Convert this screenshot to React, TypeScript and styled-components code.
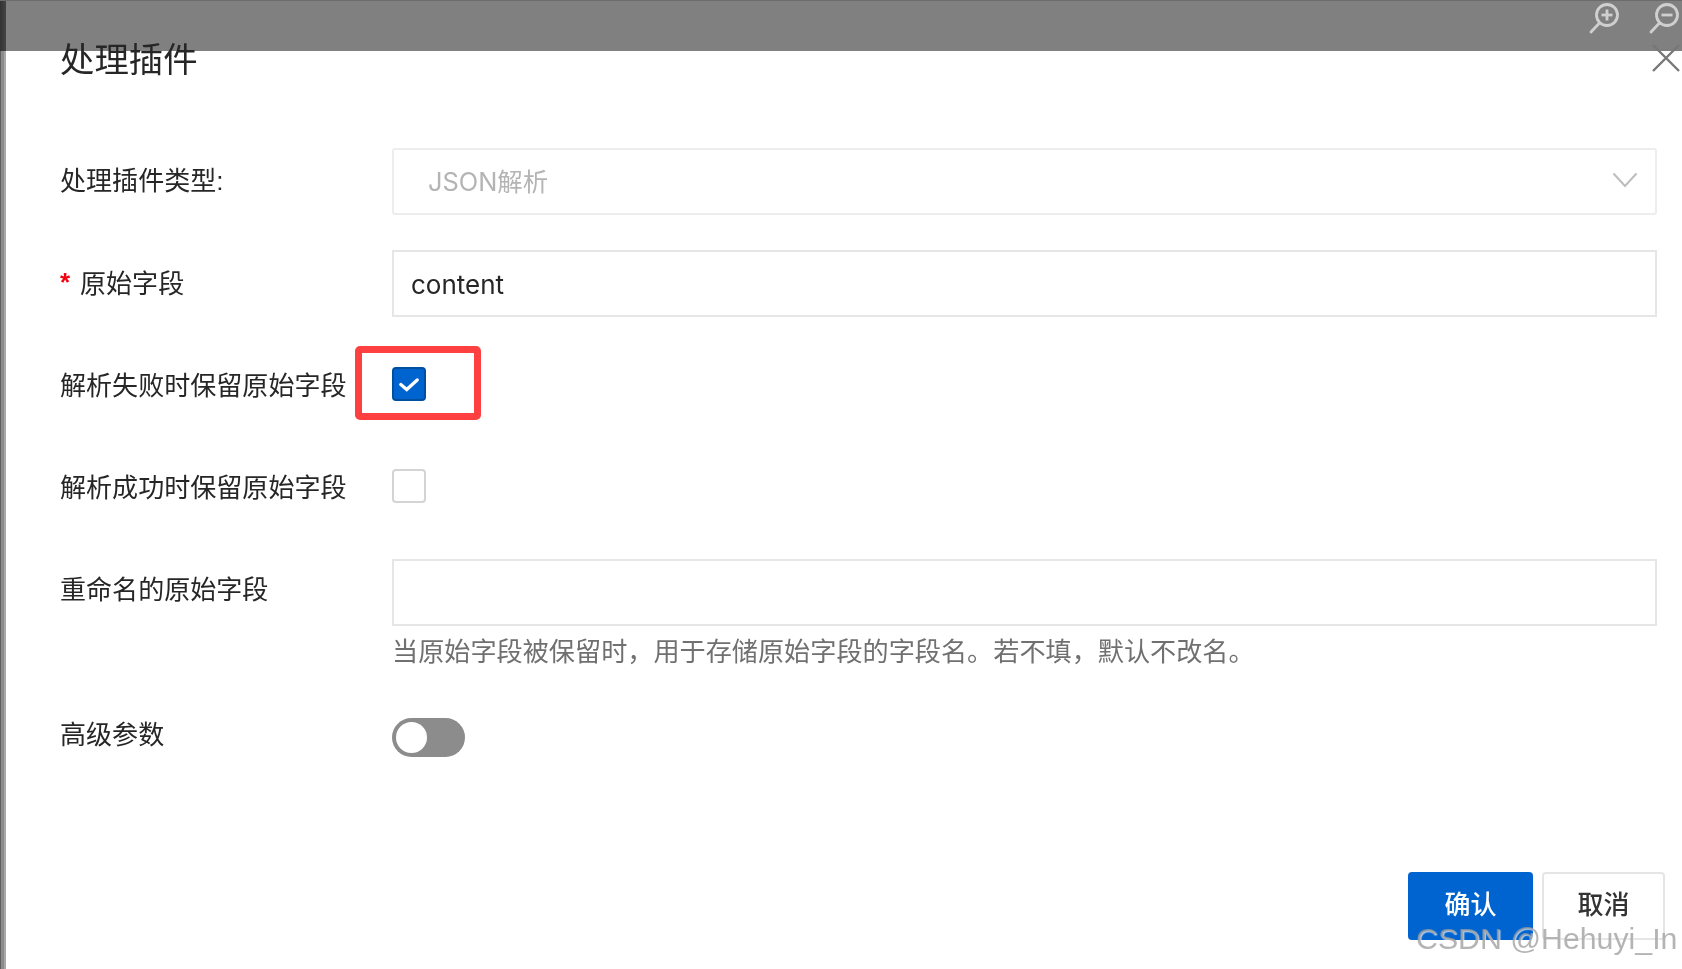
import styled, { createGlobalStyle } from "styled-components";

const GlobalStyle = createGlobalStyle`
  html, body {
    margin: 0;
    padding: 0;
    background: #fff;
  }
  body {
    font-family: "Liberation Sans", "Noto Sans CJK SC", sans-serif;
    color: #262626;
    overflow: hidden;
  }
`;

const Page = styled.div`
  position: relative;
  display: flex;
  width: 1682px;
  height: 969px;
  overflow: hidden;
  filter: blur(0.45px);
`;

const LeftEdge = styled.div`
  flex: 0 0 6px;
  background: linear-gradient(90deg, #5e5e5e 0, #5e5e5e 1px, #8c8c8c 1px, #8c8c8c 4px, #a8a8a8 4px);
`;

const Mask = styled.div`
  position: absolute;
  top: 0;
  left: 0;
  right: 0;
  height: 51px;
  display: flex;
  justify-content: flex-end;
  gap: 28px;
  padding: 2px 1px 0 0;
  box-sizing: border-box;
  background: linear-gradient(90deg, #333 0, #444 6px, #808080 6px);
  border-top: 1px solid #6c6c6c;
`;

const Dialog = styled.div`
  position: relative;
  flex: 1;
  display: flex;
  flex-direction: column;
  padding: 40px 25px 29px 54px;
`;

const Header = styled.div`
  display: flex;
  justify-content: space-between;
  align-items: center;
  height: 40px;
  margin-bottom: 68px;
`;

const Title = styled.h2`
  margin: 0;
  font-size: 34.4px;
  font-weight: 400;
  line-height: 40px;
  color: #262626;
`;

const CloseIcon = styled.svg`
  width: 28px;
  height: 28px;
  margin-right: -23px;
  margin-bottom: 4px;
  stroke: #777;
  stroke-width: 2.4;
  fill: none;
`;

const Row = styled.div<{ $h: number; $mb: number }>`
  display: flex;
  align-items: center;
  height: ${(p) => p.$h}px;
  margin-bottom: ${(p) => p.$mb}px;
`;

const Label = styled.label<{ $dy?: number }>`
  flex: 0 0 332px;
  font-size: 26.05px;
  line-height: 34px;
  color: #262626;
  margin-top: ${(p) => Math.max(p.$dy ?? 0, 0) * 2}px;
  margin-bottom: ${(p) => Math.max(-(p.$dy ?? 0), 0) * 2}px;
`;

const Star = styled.span`
  display: inline-block;
  width: 20px;
  color: #f5000f;
  font-size: 26px;
  font-weight: 700;
  line-height: 26px;
  vertical-align: 2px;
`;

const Field = styled.div<{ $radius?: number }>`
  flex: 1;
  height: 67px;
  box-sizing: border-box;
  display: flex;
  align-items: center;
  padding: 2px 17px 0;
  border: 2px solid #e6e6e6;
  border-radius: ${(p) => p.$radius ?? 0}px;
  font-family: Inter, "Noto Sans CJK SC", sans-serif;
  font-size: 26px;
  color: #262626;
`;

const SelectBox = styled(Field)`
  justify-content: space-between;
  padding: 0 17px 3px 34px;
  border-color: #ededed;
  font-size: 25.4px;
  color: #b4b4b4;
`;

const Chevron = styled.svg`
  width: 26px;
  height: 16px;
  stroke: #bdbdbd;
  stroke-width: 2;
  fill: none;
`;

const CheckBox = styled.div<{ $checked?: boolean }>`
  width: 34px;
  height: 34px;
  box-sizing: border-box;
  display: flex;
  align-items: center;
  justify-content: center;
  border-radius: 4px;
  background: ${(p) => (p.$checked ? "#0064d0" : "#fff")};
  border: 2px solid ${(p) => (p.$checked ? "#004f9f" : "#d4d4d4")};
`;

const Highlight = styled.div`
  position: absolute;
  left: 349px;
  top: 346px;
  width: 126px;
  height: 74px;
  box-sizing: border-box;
  border: 7px solid #ff4040;
  border-radius: 5px;
`;

const Help = styled.div`
  margin: 8px 0 48px 332px;
  font-size: 26.15px;
  line-height: 36px;
  color: #707070;
`;

const Toggle = styled.div`
  width: 73px;
  height: 39px;
  box-sizing: border-box;
  padding: 4px;
  border-radius: 20px;
  background: #8c8c8c;
`;

const Knob = styled.div`
  width: 31px;
  height: 31px;
  border-radius: 50%;
  background: #fff;
`;

const Footer = styled.div`
  margin-top: auto;
  display: flex;
  justify-content: flex-end;
  gap: 9px;
  margin-right: -8px;
`;

const Button = styled.button<{ $primary?: boolean }>`
  width: ${(p) => (p.$primary ? 125 : 123)}px;
  height: 68px;
  padding: 0 0 7px;
  box-sizing: border-box;
  font-family: "Noto Sans CJK SC", sans-serif;
  font-size: 26px;
  font-weight: 500;
  border-radius: 4px;
  color: ${(p) => (p.$primary ? "#fff" : "#333")};
  background: ${(p) => (p.$primary ? "#0064d0" : "#fff")};
  border: ${(p) => (p.$primary ? "none" : "2px solid #e5e5e5")};
`;

const Watermark = styled.div`
  position: absolute;
  left: 1416px;
  top: 921px;
  font-family: "Liberation Sans", sans-serif;
  font-size: 30.3px;
  line-height: 36px;
  white-space: nowrap;
  color: rgba(155, 155, 155, 0.75);
  text-shadow: 1px 1px 1px rgba(255, 255, 255, 0.7);
`;

const ZoomIcon = ({ plus }: { plus?: boolean }) => (
  <svg width="32" height="34" viewBox="0 0 32 34" fill="none" stroke="#cfcfcf" strokeWidth="2.8">
    <circle cx="18" cy="12" r="10.5" />
    <path d="M10.5 20 2 29" strokeLinecap="round" />
    <path d="M12.5 12h11" />
    {plus && <path d="M18 6.5v11" />}
  </svg>
);

const App = () => (
  <>
    <GlobalStyle />
    <Page>
      <LeftEdge />
      <Mask>
        <ZoomIcon plus />
        <ZoomIcon />
      </Mask>
      <Dialog>
        <Header>
          <Title>处理插件</Title>
          <CloseIcon viewBox="0 0 28 28">
            <path d="M1 1l26 26M27 1 1 27" />
          </CloseIcon>
        </Header>
        <Row $h={67} $mb={35}>
          <Label $dy={-1}>处理插件类型:</Label>
          <SelectBox $radius={3}>
            JSON解析
            <Chevron viewBox="0 0 26 16">
              <path d="M1.5 1.5 13 14 24.5 1.5" />
            </Chevron>
          </SelectBox>
        </Row>
        <Row $h={67} $mb={50}>
          <Label>
            <Star>*</Star>原始字段
          </Label>
          <Field>content</Field>
        </Row>
        <Row $h={34} $mb={68}>
          <Label $dy={2}>解析失败时保留原始字段</Label>
          <CheckBox $checked>
            <svg width="20" height="15" viewBox="0 0 22 16" fill="none" stroke="#fff" strokeWidth="3.6" strokeLinecap="round">
              <path d="M2 8 8.5 13.5 20 3" />
            </svg>
          </CheckBox>
        </Row>
        <Row $h={34} $mb={56}>
          <Label $dy={2}>解析成功时保留原始字段</Label>
          <CheckBox />
        </Row>
        <Row $h={67} $mb={0}>
          <Label $dy={-3}>重命名的原始字段</Label>
          <Field />
        </Row>
        <Help>当原始字段被保留时，用于存储原始字段的字段名。若不填，默认不改名。</Help>
        <Row $h={39} $mb={0}>
          <Label $dy={-3}>高级参数</Label>
          <Toggle>
            <Knob />
          </Toggle>
        </Row>
        <Footer>
          <Button $primary>确认</Button>
          <Button>取消</Button>
        </Footer>
        <Highlight />
      </Dialog>
      <Watermark>CSDN @Hehuyi_In</Watermark>
    </Page>
  </>
);

export default App;
